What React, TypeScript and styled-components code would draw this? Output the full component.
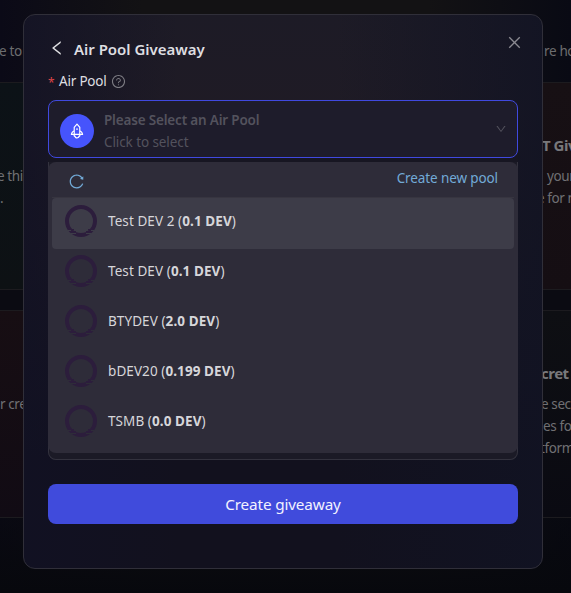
import React from "react";
import styled, { createGlobalStyle } from "styled-components";
import {
  AiOutlineLeft,
  AiOutlineClose,
  AiOutlineQuestionCircle,
  AiOutlineReload,
  AiOutlineDown,
  AiOutlineRocket,
} from "react-icons/ai";

const GlobalStyle = createGlobalStyle`
  * { box-sizing: border-box; }
  body {
    margin: 0;
    overflow: hidden;
    background: #07070f;
    font-family: "Noto Sans", "Open Sans", sans-serif;
    font-size: 13.5px;
    line-height: 22px;
    color: #d6d6da;
  }
  button { font: inherit; border: 0; padding: 0; background: none; color: inherit; }
`;

const Page = styled.main`
  position: relative;
  height: 593px;
  overflow: hidden;
  background: linear-gradient(180deg, transparent 75%, #07080d), linear-gradient(90deg, #0b0a17, #131214 25%, #131214 75%, #090a14);
`;

const Backdrop = styled.div`
  display: grid;
  grid-template-columns: 23px 28px;
  grid-template-rows: 82px 208px 20px 208px;
  justify-content: space-between;
  height: 518px;
`;

const Intro = styled.div<{ $shift?: number }>`
  padding-top: 40px;
  text-indent: ${(p) => p.$shift ?? 0}px;
  overflow: hidden;
  white-space: nowrap;
  letter-spacing: -0.35px;
  color: #6d6d6f;
`;

const Gap = styled.div`
  grid-column: 1 / -1;
  background: #0b0b12;
`;

const BackCard = styled.section<{ $from: string; $to: string; $top: number }>`
  padding-top: ${(p) => p.$top}px;
  overflow: hidden;
  white-space: nowrap;
  color: #707073;
  background: linear-gradient(180deg, ${(p) => p.$from}, ${(p) => p.$to});
  border-top: 1px solid #1c1b1f;
  border-bottom: 1px solid #1c1b1f;
`;

const BackTitle = styled.h2<{ $shift?: number }>`
  margin: 0 0 8px ${(p) => p.$shift ?? 0}px;
  font-size: 15px;
  line-height: 24px;
  font-weight: 700;
  letter-spacing: -0.5px;
  color: #78787b;
`;

const BackLine = styled.p<{ $shift?: number }>`
  margin: 0 0 0 ${(p) => p.$shift ?? 0}px;
  letter-spacing: -0.4px;
`;

const Modal = styled.section`
  position: absolute;
  left: 23px;
  top: 14px;
  width: 520px;
  height: 555px;
  padding: 23px 24px 24px;
  border: 1px solid #302f39;
  border-radius: 12px;
  background:
    linear-gradient(90deg, rgba(17, 17, 36, 0.7) 0, rgba(18, 18, 36, 0) 30%, rgba(18, 20, 36, 0) 60%, rgba(17, 19, 35, 0.8) 100%),
    linear-gradient(180deg, #1d1b26 0, #1f1b25 18%, #12111e 80%, #12111e 100%);
`;

const Header = styled.header`
  display: flex;
  align-items: center;
  height: 22px;
  color: #dedee1;
`;

const Back = styled.button`
  display: flex;
  width: 18px;
  margin: -2px 8px 0 0;
  font-size: 18px;
`;

const Title = styled.h1`
  flex: 1;
  margin: 0;
  font-size: 15px;
  font-weight: 600;
  letter-spacing: -0.02px;
`;

const Close = styled.button`
  display: flex;
  margin: -13px -5px 0 0;
  font-size: 17px;
  color: #8b8a91;
`;

const Label = styled.label`
  display: flex;
  align-items: center;
  height: 22px;
  margin: 10px 0 8px;
  color: #dedee1;
  letter-spacing: -0.2px;
  svg { margin-left: 4px; font-size: 15px; color: #7d7c83; }
`;

const Star = styled.span`
  width: 11px;
  padding-top: 4px;
  font-size: 12px;
  color: #dc4446;
`;

const Field = styled.div`
  height: 360px;
  border-radius: 8px;
  background: #1b1a26;
  box-shadow: inset 0 0 0 1px #33323e;
`;

const SelectWrap = styled.div`
  height: 62px;
  background: #171622;
  border-radius: 8px 8px 0 0;
`;

const Select = styled.div`
  display: flex;
  align-items: center;
  height: 58px;
  padding: 0 10px 0 11px;
  border: 1px solid #4049df;
  border-radius: 8px;
  background: #1e1c2b;
  color: #53525d;
  & > svg { margin: 0 0 0 auto; font-size: 12px; }
`;

const PoolBadge = styled.span`
  display: grid;
  place-items: center;
  width: 34px;
  height: 34px;
  margin: 4px 10px 0 0;
  border-radius: 50%;
  color: #fff;
  font-size: 18px;
  background: #4654fc;
`;

const SelectText = styled.div`
  padding-top: 4px;
  font-size: 13.5px;
  strong { display: block; font-weight: 600; letter-spacing: -0.18px; }
  span { letter-spacing: -0.09px; }
`;

const Menu = styled.div`
  height: 291px;
  padding: 0 4px;
  border-radius: 8px;
  background: #2e2c39;
`;

const Tools = styled.div`
  display: flex;
  justify-content: space-between;
  height: 36px;
  padding: 5px 16px 0;
  border-bottom: 1px solid #373540;
  color: #72aad7;
  letter-spacing: -0.11px;
  svg { margin-top: 6px; font-size: 17px; }
`;

const PoolList = styled.ul`
  margin: 0;
  padding: 0;
  list-style: none;
`;

const Pool = styled.li<{ $active?: boolean }>`
  display: flex;
  align-items: center;
  height: ${(p) => (p.$active ? 51 : 50)}px;
  padding: 0 13px ${(p) => (p.$active ? 5 : 6)}px;
  border-radius: 4px;
  background: ${(p) => (p.$active ? "#3d3c48" : "transparent")};
  letter-spacing: 0.08px;
  svg { margin-right: 11px; }
  strong { font-weight: 700; }
`;

const Submit = styled.button`
  display: block;
  width: 100%;
  height: 40px;
  margin-top: 24px;
  border-radius: 8px;
  color: #f2f2ff;
  font-size: 15.3px;
  letter-spacing: -0.15px;
  background: #404bdc;
`;

const pools = [
  { name: "Test DEV 2", amount: "0.1 DEV" },
  { name: "Test DEV", amount: "0.1 DEV" },
  { name: "BTYDEV", amount: "2.0 DEV" },
  { name: "bDEV20", amount: "0.199 DEV" },
  { name: "TSMB", amount: "0.0 DEV" },
];

function TokenRing({ surface }: { surface: string }) {
  return (
    <svg width="32" height="32" viewBox="0 0 32 32" fill="none">
      <circle cx="16" cy="16" r="14" stroke="#2c1d3c" strokeWidth="4" />
      <path d="M3 25.5h3M26 25.5h3M6 28.5h5M21 28.5h5" stroke={surface} />
      <path d="M4 24.5h5M7 26.5h4M23 24.5h5M21 26.5h4" stroke="#2c1d3c" />
    </svg>
  );
}

export default function App() {
  return (
    <>
      <GlobalStyle />
      <Page>
        <Backdrop>
          <Intro $shift={-1}>e to</Intro>
          <Intro $shift={1}>re host</Intro>
          <BackCard $from="#0c1217" $to="#0d1114" $top={82}>
            <BackLine $shift={-3}>e this</BackLine>
            <BackLine>.</BackLine>
          </BackCard>
          <BackCard $from="#171014" $to="#150e13" $top={50}>
            <BackTitle $shift={-1}>T Giveaway</BackTitle>
            <BackLine $shift={4}>your</BackLine>
            <BackLine $shift={-6}>e for more</BackLine>
          </BackCard>
          <Gap />
          <BackCard $from="#170e13" $to="#110b14" $top={82}>
            <BackLine>r create</BackLine>
          </BackCard>
          <BackCard $from="#0e0f13" $to="#0a0a12" $top={50}>
            <BackTitle $shift={-2}>cret Giveaway</BackTitle>
            <BackLine $shift={-2}>e secret</BackLine>
            <BackLine>es for</BackLine>
            <BackLine $shift={-3}>tform</BackLine>
          </BackCard>
        </Backdrop>

        <Modal>
          <Header>
            <Back aria-label="Back"><AiOutlineLeft /></Back>
            <Title>Air Pool Giveaway</Title>
            <Close aria-label="Close"><AiOutlineClose /></Close>
          </Header>
          <Label>
            <Star>*</Star>Air Pool<AiOutlineQuestionCircle />
          </Label>
          <Field>
            <SelectWrap>
              <Select>
                <PoolBadge><AiOutlineRocket /></PoolBadge>
                <SelectText>
                  <strong>Please Select an Air Pool</strong>
                  <span>Click to select</span>
                </SelectText>
                <AiOutlineDown />
              </Select>
            </SelectWrap>
            <Menu>
              <Tools>
                <AiOutlineReload />
                <span>Create new pool</span>
              </Tools>
              <PoolList>
                {pools.map((pool, i) => (
                  <Pool key={pool.name} $active={i === 0}>
                    <TokenRing surface={i === 0 ? "#3d3c48" : "#2e2c39"} />
                    <span>{pool.name} (<strong>{pool.amount}</strong>)</span>
                  </Pool>
                ))}
              </PoolList>
            </Menu>
          </Field>
          <Submit>Create giveaway</Submit>
        </Modal>
      </Page>
    </>
  );
}
